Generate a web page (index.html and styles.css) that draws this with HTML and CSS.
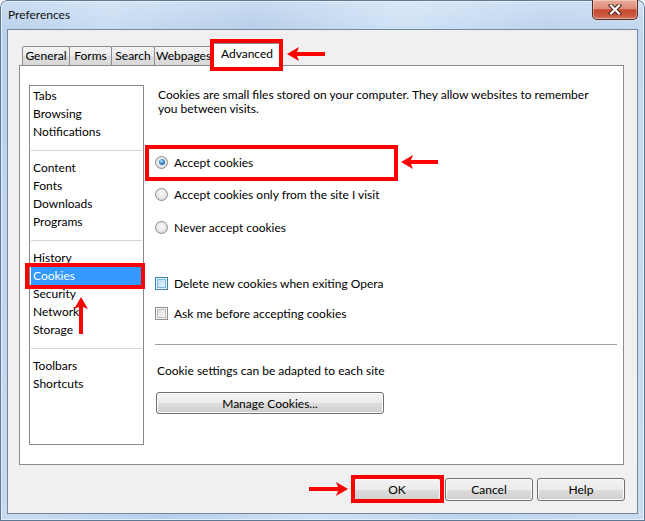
FILE: index.html
```html
<!DOCTYPE html>
<html>
<head>
<meta charset="utf-8">
<title>Preferences</title>
<link rel="stylesheet" href="styles.css">
</head>
<body>
<div class="window">
  <div class="titlebar">
    <span class="title">Preferences</span>
    <div class="close">
      <svg width="14" height="11" viewBox="0 0 14 11">
        <path d="M3 1.5 L11 9.5 M11 1.5 L3 9.5" stroke="#4a2219" stroke-width="4.2" stroke-linecap="square" fill="none"/>
        <path d="M3 1.5 L11 9.5 M11 1.5 L3 9.5" stroke="#ffffff" stroke-width="2.2" stroke-linecap="square" fill="none"/>
      </svg>
    </div>
  </div>
  <div class="client">
    <div class="tabs">
      <div class="tab w-general">General</div>
      <div class="tab w-forms">Forms</div>
      <div class="tab w-search">Search</div>
      <div class="tab w-webpages">Webpages</div>
      <div class="tab active w-advanced">Advanced
        <span class="mark mark-tab"></span>
        <svg class="arrow arrow-tab" width="38" height="14" viewBox="0 0 38 14"><path d="M0 7 L12 0 L10 5 L38 5 L38 9 L10 9 L12 14 Z" fill="#f00"/></svg>
      </div>
    </div>
    <div class="panel">
      <ul class="list">
        <li>Tabs</li>
        <li>Browsing</li>
        <li>Notifications</li>
        <li class="sep"></li>
        <li>Content</li>
        <li>Fonts</li>
        <li>Downloads</li>
        <li>Programs</li>
        <li class="sep"></li>
        <li>History</li>
        <li class="selected">Cookies
          <span class="mark mark-list"></span>
          <svg class="arrow arrow-up" width="14" height="37" viewBox="0 0 14 37"><path d="M7 0 L14 12 L9 10 L9 37 L5 37 L5 10 L0 12 Z" fill="#f00"/></svg>
        </li>
        <li>Security</li>
        <li>Network</li>
        <li>Storage</li>
        <li class="sep"></li>
        <li>Toolbars</li>
        <li>Shortcuts</li>
      </ul>
      <div class="content">
        <p class="desc">Cookies are small files stored on your computer. They allow websites to remember you between visits.</p>
        <div class="row r1 accept">
          <span class="radio on"></span><span class="label">Accept cookies</span>
          <span class="mark mark-accept"></span>
          <svg class="arrow arrow-accept" width="37" height="14" viewBox="0 0 37 14"><path d="M0 7 L12 0 L10 5 L37 5 L37 9 L10 9 L12 14 Z" fill="#f00"/></svg>
        </div>
        <div class="row r2">
          <span class="radio"></span><span class="label">Accept cookies only from the site I visit</span>
        </div>
        <div class="row r3">
          <span class="radio"></span><span class="label">Never accept cookies</span>
        </div>
        <div class="row r4">
          <span class="check hot"></span><span class="label">Delete new cookies when exiting Opera</span>
        </div>
        <div class="row r5">
          <span class="check"></span><span class="label">Ask me before accepting cookies</span>
        </div>
        <div class="hr"></div>
        <p class="note">Cookie settings can be adapted to each site</p>
        <button class="btn manage">Manage Cookies...</button>
      </div>
    </div>
    <div class="buttons">
      <button class="btn ok">OK
        <span class="mark mark-ok"></span>
        <svg class="arrow arrow-ok" width="39" height="14" viewBox="0 0 39 14"><path d="M39 7 L27 0 L29 5 L0 5 L0 9 L29 9 L27 14 Z" fill="#f00"/></svg>
      </button>
      <button class="btn">Cancel</button>
      <button class="btn">Help</button>
    </div>
  </div>
</div>
</body>
</html>
```
FILE: styles.css
```css
* { box-sizing: border-box; }
html, body { margin: 0; padding: 0; }
body {
  width: 645px;
  height: 521px;
  overflow: hidden;
  background: #ffffff;
  font-family: Lato, "Liberation Sans", sans-serif;
  font-size: 12px;
  color: #000;
}
.window {
  width: 645px;
  height: 521px;
  display: flex;
  flex-direction: column;
  border-radius: 7px 7px 0 0;
  background:
    linear-gradient(to bottom, rgba(255,255,255,0.25), rgba(255,255,255,0) 30px),
    linear-gradient(100deg, #b9d1ec 0%, #c8dcf2 15%, #b7cfeb 35%, #cfe1f5 55%, #bdd4ee 75%, #c9dcf2 100%);
  box-shadow: inset 0 0 0 1px #5f7894, inset 0 0 0 2px #e6f0fb;
}
.titlebar {
  height: 29px;
  flex-shrink: 0;
  display: flex;
  justify-content: space-between;
  align-items: flex-start;
  padding: 0 7px 0 8px;
}
.title {
  margin-top: 7px;
  line-height: 16px;
  font-size: 12px;
  color: #111;
}
.close {
  width: 46px;
  height: 20px;
  margin-top: 0;
  border: 1px solid #5b2c24;
  border-top: none;
  border-radius: 0 0 5px 5px;
  background: linear-gradient(to bottom, #e9aa98 0%, #dc8c78 45%, #c6462f 52%, #cc5a43 85%, #d7826c 100%);
  box-shadow: inset 0 0 0 1px rgba(255,255,255,0.35);
  display: flex;
  align-items: center;
  justify-content: center;
}
.client {
  height: 485px;
  margin: 0 7px 7px 7px;
  border: 1px solid #76879b;
  background: #f0f0f0;
  display: flex;
  flex-direction: column;
}
.tabs {
  height: 35px;
  flex-shrink: 0;
  display: flex;
  align-items: flex-end;
  padding-left: 14px;
  position: relative;
  z-index: 1;
}
.tab {
  height: 19px;
  border: 1px solid #898c95;
  border-bottom: none;
  border-radius: 2px 2px 0 0;
  margin-right: -1px;
  background: linear-gradient(to bottom, #f3f3f3 0%, #ececec 50%, #e0e0e0 51%, #d8d8d8 100%);
  display: flex;
  align-items: center;
  justify-content: center;
  line-height: 14px;
  white-space: nowrap;
}
.w-general { width: 48px; }
.w-forms { width: 43px; }
.w-search { width: 44px; }
.w-webpages { width: 59px; }
.w-advanced { width: 70px; }
.tab.active {
  height: 23px;
  margin-bottom: -1px;
  background: #ffffff;
  align-items: flex-start;
  padding-top: 3px;
  position: relative;
}
.mark {
  position: absolute;
  border: 4px solid #ff0000;
  pointer-events: none;
  z-index: 5;
}
.arrow {
  position: absolute;
  z-index: 5;
}
.mark-tab { left: -3px; right: -2px; top: -5px; bottom: -5px; }
.arrow-tab { left: 74px; top: 3px; }

.panel {
  height: 400px;
  flex-shrink: 0;
  margin: 0 13px 0 11px;
  border: 1px solid #898c95;
  background: #ffffff;
  display: flex;
  padding: 19px 6px 0 9px;
}
.list {
  width: 115px;
  height: 360px;
  flex-shrink: 0;
  margin: 0;
  padding: 1px 0 0 0;
  list-style: none;
  border: 1px solid #828790;
}
.list li {
  height: 18px;
  line-height: 18px;
  margin: 0 1px;
  padding-left: 2px;
  white-space: nowrap;
}
.list li.sep {
  background: linear-gradient(to bottom, transparent 9px, #d5d5d5 9px, #d5d5d5 10px, transparent 10px);
}
.list li.selected {
  background: #3399ff;
  color: #ffffff;
  position: relative;
}
.mark-list { left: -6px; right: -3px; top: -4px; bottom: -4px; }
.arrow-up { left: 43px; top: 30px; }

.content {
  flex: 1;
  margin-left: 11px;
  display: flex;
  flex-direction: column;
  align-items: flex-start;
}
.desc {
  margin: 3px 0 0 3px;
  line-height: 14px;
  width: 450px;
}
.row {
  height: 20px;
  display: flex;
  align-items: center;
  gap: 6px;
  white-space: nowrap;
}
.r1 { margin-top: 36px; position: relative; }
.r2 { margin-top: 12px; }
.r3 { margin-top: 13px; }
.r4 { margin-top: 36px; }
.r5 { margin-top: 10px; }
.mark-accept { left: -10px; top: -7px; width: 253px; height: 36px; }
.arrow-accept { left: 246px; top: 3px; }

.radio {
  width: 13px;
  height: 13px;
  flex-shrink: 0;
  border-radius: 50%;
  border: 1px solid #8b8b8b;
  background: radial-gradient(circle at 50% 40%, #fbfbfb 0%, #e6e6e6 55%, #cfcfcf 100%);
  display: flex;
  align-items: center;
  justify-content: center;
}
.radio.on::after {
  content: "";
  width: 6px;
  height: 6px;
  border-radius: 50%;
  background: radial-gradient(circle at 40% 35%, #b5e6fb 0%, #3d8fc8 45%, #154a7a 100%);
}
.check {
  width: 13px;
  height: 13px;
  flex-shrink: 0;
  border: 1px solid #8e8f8f;
  background: linear-gradient(135deg, #d9d9d9 0%, #eeeeee 60%, #fafafa 100%);
  box-shadow: inset 0 0 0 1px #f4f4f4, inset 0 0 0 2px #bdbdbd;
}
.check.hot {
  border-color: #3c7fb1;
  background: linear-gradient(135deg, #b7dbf0 0%, #d3ecfa 60%, #e8f6fd 100%);
  box-shadow: inset 0 0 0 1px #eaf6fd, inset 0 0 0 2px #79b6dc;
}
.hr {
  margin-top: 21px;
  width: 462px;
  height: 1px;
  background: #a0a0a0;
  flex-shrink: 0;
}
.note {
  margin: 19px 0 0 2px;
  line-height: 14px;
}
.btn {
  height: 23px;
  width: 88px;
  padding: 0;
  border: 1px solid #707070;
  border-radius: 3px;
  background: linear-gradient(to bottom, #f2f2f2 0%, #ebebeb 50%, #dddddd 51%, #cfcfcf 100%);
  box-shadow: inset 0 0 0 1px #fbfbfb;
  font-family: Lato, "Liberation Sans", sans-serif;
  font-size: 12px;
  color: #000;
  display: flex;
  align-items: center;
  justify-content: center;
}
.manage {
  margin: 14px 0 0 1px;
  width: 228px;
  height: 22px;
}
.buttons {
  margin-top: 13px;
  padding-right: 12px;
  display: flex;
  justify-content: flex-end;
  gap: 4px;
}
.ok { position: relative; }
.mark-ok { left: -3px; top: -4px; right: -4px; bottom: -3px; }
.arrow-ok { left: -45px; top: 3px; }
```
